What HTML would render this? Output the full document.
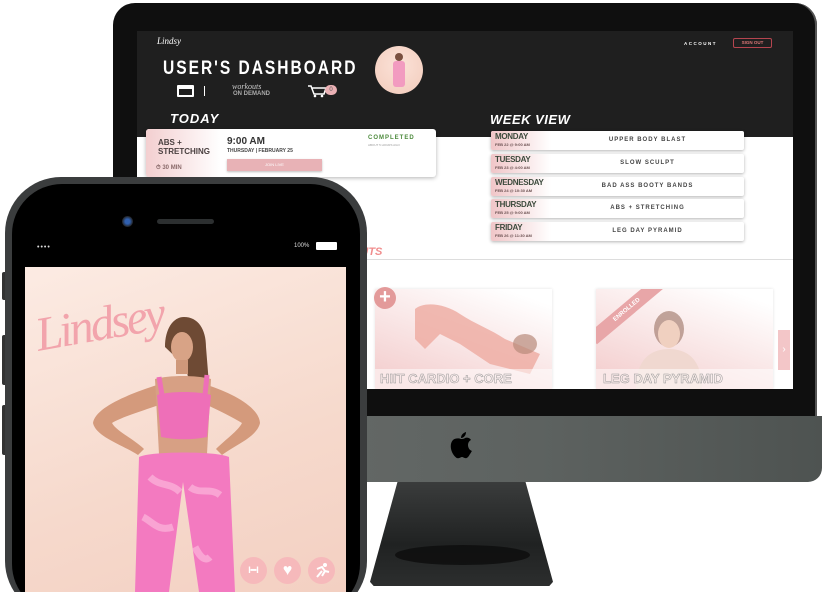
<!DOCTYPE html>
<html style="height:592px;overflow:hidden"><head><meta charset="utf-8"><style>
*{margin:0;padding:0;box-sizing:border-box}
html,body{width:828px;height:592px;overflow:hidden}
body{background:#fff;position:relative;font-family:"Liberation Sans",sans-serif}
.a{position:absolute}
.row{position:absolute;width:253px;height:19px;background:#fff;box-shadow:0 1px 3px rgba(0,0,0,.3);border-radius:2px;overflow:hidden}
.row .d{position:absolute;left:0;top:0;width:60px;height:19px;background:linear-gradient(90deg,#f0c6c8,#fff)}
.row .n{position:absolute;left:4px;top:1px;font-size:8px;font-weight:bold;color:#3c4a3c;letter-spacing:-.3px}
.row .t{position:absolute;left:4px;top:11px;font-size:4px;color:#6a5050;font-weight:bold}
.row .w{position:absolute;left:60px;right:0;top:6px;text-align:center;font-size:6px;letter-spacing:1px;color:#444;font-weight:bold}
</style></head><body>

<div class="a" style="left:113px;top:3px;width:704px;height:416px;background:#0f0f0f;border-radius:22px 22px 0 0;box-shadow:inset -2px 0 0 #555"></div>
<div class="a" style="left:113px;top:416px;width:709px;height:66px;background:linear-gradient(90deg,#6a6e6c,#5d6260 60%,#4e5351);border-radius:0 0 14px 14px"></div>
<svg class="a" style="left:448px;top:430px" width="26" height="32" viewBox="0 0 26 32"><path d="M13 9c-2-1-6-1-8 1-3 3-3 9 0 14 2 3 4 5 6 4 1 0 2-1 3-1s2 1 3 1c2 1 4-2 5-4 1-1 1-2 2-3-3-1-4-4-4-6s1-4 3-5c-1-2-4-3-6-2-1 1-3 1-4 1z" fill="#000"/><path d="M13 8c0-3 2-5 5-6 0 3-2 6-5 6z" fill="#000"/></svg>
<div class="a" style="left:370px;top:482px;width:183px;height:104px;background:linear-gradient(180deg,#3a3c3c,#202222 60%,#2c2e2e);clip-path:polygon(15% 0,85% 0,100% 96%,98% 100%,2% 100%,0 96%)"></div>
<div class="a" style="left:395px;top:545px;width:135px;height:20px;border-radius:50%;background:#0c0c0c;opacity:.8"></div>

<div class="a" style="left:137px;top:31px;width:656px;height:358px;background:#fff;overflow:hidden">
  <div class="a" style="left:0;top:0;width:656px;height:106px;background:#1f1f1f"></div>
  <div class="a" style="left:20px;top:5px;color:#fff;font-family:'Liberation Serif',serif;font-style:italic;font-size:9px">Lindsy</div>
  <div class="a" style="left:26px;top:27px;color:#fff;font-weight:bold;font-size:19px;letter-spacing:2.4px;transform:scaleX(.82);transform-origin:left">USER'S DASHBOARD</div>
  <div class="a" style="left:238px;top:15px;width:48px;height:48px;border-radius:50%;background:radial-gradient(circle at 50% 40%,#fbe2d8,#f2cbbb)"></div>
  <div class="a" style="left:258px;top:22px;width:8px;height:8px;border-radius:50%;background:#7a5040"></div>
  <div class="a" style="left:256px;top:30px;width:12px;height:26px;background:#f29bc0;border-radius:3px"></div>
  <div class="a" style="left:40px;top:54px;width:17px;height:12px;border:2px solid #fff;border-top-width:4px;border-radius:1px"></div>
  <div class="a" style="left:67px;top:55px;width:1px;height:10px;background:#fff"></div>
  <div class="a" style="left:95px;top:51px;color:#ccc;font-family:'Liberation Serif',serif;font-style:italic;font-size:8px">workouts</div>
  <div class="a" style="left:96px;top:60px;color:#aaa;font-size:6px;font-weight:bold">ON DEMAND</div>
  <svg class="a" style="left:170px;top:54px" width="20" height="13"><path d="M1 1h3l3 8h10l2-6H5" stroke="#fff" stroke-width="1.5" fill="none"/><circle cx="8" cy="11" r="1.3" fill="#fff"/><circle cx="15" cy="11" r="1.3" fill="#fff"/></svg>
  <div class="a" style="left:188px;top:54px;width:12px;height:10px;border-radius:5px;background:#eab0b4;color:#555;font-size:6px;text-align:center;line-height:10px">0</div>
  <div class="a" style="left:547px;top:10px;color:#fff;font-size:4.5px;letter-spacing:1.5px;font-weight:bold">ACCOUNT</div>
  <div class="a" style="left:596px;top:7px;width:39px;height:10px;border:1px solid #b5454f;border-radius:2px;color:#d77;font-size:4.5px;text-align:center;line-height:8px;font-weight:bold">SIGN OUT</div>
  <div class="a" style="left:33px;top:80px;color:#fff;font-weight:900;font-style:italic;font-size:13px;letter-spacing:1px">TODAY</div>
  <div class="a" style="left:353px;top:81px;color:#fff;font-weight:900;font-style:italic;font-size:13px;letter-spacing:.5px">WEEK VIEW</div>
  <div class="a" style="left:9px;top:98px;width:290px;height:48px;background:#fff;box-shadow:0 1px 4px rgba(0,0,0,.3);border-radius:3px;overflow:hidden">
    <div class="a" style="left:0;top:0;width:75px;height:48px;background:linear-gradient(90deg,#f3cfd0,#fff)"></div>
    <div class="a" style="left:12px;top:9px;font-size:8px;font-weight:bold;color:#4a4040;line-height:9px">ABS +<br>STRETCHING</div>
    <div class="a" style="left:10px;top:36px;font-size:6px;color:#8a6a6a;font-weight:bold">⏱ 30 MIN</div>
    <div class="a" style="left:81px;top:7px;font-size:10px;font-weight:bold;color:#333">9:00 AM</div>
    <div class="a" style="left:81px;top:19px;font-size:5px;font-weight:bold;color:#444">THURSDAY | FEBRUARY 25</div>
    <div class="a" style="left:81px;top:30px;width:95px;height:12px;background:#e8b2b6;color:#fff;font-size:4px;text-align:center;line-height:12px;box-shadow:0 1px 2px rgba(0,0,0,.25)">JOIN LIVE</div>
    <div class="a" style="left:222px;top:6px;font-size:6px;font-weight:bold;color:#4c8a3c;letter-spacing:1px">COMPLETED</div>
    <div class="a" style="left:222px;top:14px;font-size:3px;color:#999">ABOUT 5 HOURS AGO</div>
  </div>
  <div class="row" style="left:354px;top:100px"><div class="d"></div><div class="n">MONDAY</div><div class="t">FEB 22 @ 9:00 AM</div><div class="w">UPPER BODY BLAST</div></div>
  <div class="row" style="left:354px;top:123px"><div class="d"></div><div class="n">TUESDAY</div><div class="t">FEB 23 @ 4:00 AM</div><div class="w">SLOW SCULPT</div></div>
  <div class="row" style="left:354px;top:146px"><div class="d"></div><div class="n">WEDNESDAY</div><div class="t">FEB 24 @ 10:30 AM</div><div class="w">BAD ASS BOOTY BANDS</div></div>
  <div class="row" style="left:354px;top:168px"><div class="d"></div><div class="n">THURSDAY</div><div class="t">FEB 25 @ 9:00 AM</div><div class="w">ABS + STRETCHING</div></div>
  <div class="row" style="left:354px;top:191px"><div class="d"></div><div class="n">FRIDAY</div><div class="t">FEB 26 @ 11:30 AM</div><div class="w">LEG DAY PYRAMID</div></div>
  <div class="a" style="left:180px;top:215px;color:#f08d8d;font-weight:900;font-style:italic;font-size:11px">WORKOUTS</div>
  <div class="a" style="left:0;top:228px;width:656px;height:1px;background:#ddd"></div>
  <div class="a" style="left:238px;top:258px;width:177px;height:100px;background:linear-gradient(200deg,#fff 10%,#f4d0d0 90%);box-shadow:0 0 3px rgba(0,0,0,.12)">
    <svg class="a" style="left:0;top:0" width="177" height="100"><path d="M40 20c10-8 30-5 45 5s30 15 45 25l35 15-10 20-40-10-30-20-20-10-15 15-10-10z" fill="#eeaaa0" opacity=".8"/><ellipse cx="150" cy="55" rx="12" ry="10" fill="#b88a7a" opacity=".7"/></svg>
    <div class="a" style="left:0;top:80px;width:177px;height:20px;background:rgba(255,255,255,.5)"></div>
    <div class="a" style="left:5px;top:82px;font-size:13px;font-weight:bold;color:transparent;-webkit-text-stroke:.5px #999">HIIT CARDIO + CORE</div>
  </div>
  <div class="a" style="left:237px;top:256px;width:22px;height:22px;border-radius:50%;background:#e39a9a;color:#fff;font-size:20px;line-height:20px;text-align:center;font-weight:bold">+</div>
  <div class="a" style="left:459px;top:258px;width:177px;height:100px;background:linear-gradient(200deg,#fff 10%,#f4d0d0 90%);box-shadow:0 0 3px rgba(0,0,0,.12);overflow:hidden">
    <svg class="a" style="left:0;top:0" width="177" height="100"><ellipse cx="73" cy="40" rx="15" ry="18" fill="#9a7060" opacity=".6"/><ellipse cx="73" cy="45" rx="11" ry="14" fill="#f0d0c0"/><path d="M40 100c0-30 15-40 33-40s33 10 33 40z" fill="#f0d8d0"/></svg>
    <div class="a" style="left:-14px;top:14px;width:90px;height:14px;background:#e8a6a8;transform:rotate(-40deg);color:#fff;font-size:6px;text-align:center;line-height:14px;font-weight:bold">ENROLLED</div>
    <div class="a" style="left:0;top:80px;width:177px;height:20px;background:rgba(255,255,255,.5)"></div>
    <div class="a" style="left:7px;top:82px;font-size:13px;font-weight:bold;color:transparent;-webkit-text-stroke:.5px #999">LEG DAY PYRAMID</div>
  </div>
  <div class="a" style="left:641px;top:299px;width:12px;height:40px;background:#f3c6c8;color:#fff;font-size:10px;line-height:40px;text-align:center">›</div>
</div>

<div class="a" style="left:2px;top:272px;width:5px;height:28px;background:#333;border-radius:2px"></div>
<div class="a" style="left:2px;top:335px;width:5px;height:50px;background:#333;border-radius:2px"></div>
<div class="a" style="left:2px;top:405px;width:5px;height:50px;background:#333;border-radius:2px"></div>
<div class="a" style="left:5px;top:177px;width:362px;height:440px;background:#3b3d3e;border-radius:56px"></div>
<div class="a" style="left:12px;top:184px;width:348px;height:430px;background:#000;border-radius:50px"></div>
<div class="a" style="left:122px;top:216px;width:11px;height:11px;border-radius:50%;background:radial-gradient(circle,#3060b0 30%,#222 70%)"></div>
<div class="a" style="left:157px;top:219px;width:57px;height:5px;border-radius:3px;background:#2c2f30"></div>
<div class="a" style="left:37px;top:244px;color:#ddd;font-size:7px;letter-spacing:1px">••••</div>
<div class="a" style="left:294px;top:243px;color:#ddd;font-size:6px">100%</div>
<div class="a" style="left:316px;top:242px;width:21px;height:8px;background:#fff;border-radius:1px"></div>
<div class="a" style="left:25px;top:267px;width:321px;height:325px;background:linear-gradient(160deg,#fcebe3,#f6d9cc 60%,#f3d0c2);overflow:hidden">
  <div class="a" style="left:10px;top:30px;color:#f2a4ac;font-family:'Liberation Serif',serif;font-style:italic;font-size:48px;transform:rotate(-10deg);letter-spacing:-3px;font-weight:normal">Lindsey</div>
  <svg class="a" style="left:0;top:0" width="321" height="325">
    <path d="M140 80c0-18 8-30 19-30 14 0 22 12 22 30l4 50c-6 8-14 6-18 0l-6-30z" fill="#6e4a34"/>
    <ellipse cx="157" cy="80" rx="11" ry="15" fill="#d8a386"/>
    <rect x="151" y="93" width="12" height="14" fill="#cf987a"/>
    <path d="M132 118c-25 8-62 22-64 38 3 14 30 22 45 32l6-6c-10-10-28-18-32-26 10-6 30-12 47-18z" fill="#d49a7c"/>
    <path d="M182 118c25 8 52 22 53 38-3 14-25 22-38 32l-6-6c10-10 22-18 26-26-10-6-22-12-35-18z" fill="#d49a7c"/>
    <path d="M130 112c15-4 40-4 56 0l-4 75h-48z" fill="#d7a084"/>
    <path d="M132 128c14-4 40-4 54 0l-4 42c-15 3-30 3-46 0z" fill="#ee6fb8"/>
    <path d="M134 110l3 18M182 108l-2 20" stroke="#ee6fb8" stroke-width="5"/>
    <path d="M114 190c12-6 78-6 90 0l6 135h-36l-16-110-14 110h-34z" fill="#f37ac0"/>
    <path d="M125 210c10 10 20 5 30 15M118 250c10 5 15 15 30 10M170 280c5 10 10 15 15 10M165 220c10 8 20 0 30 8" stroke="#fbb6dc" stroke-width="7" fill="none" opacity=".7"/>
  </svg>
  <div class="a" style="left:215px;top:290px;width:27px;height:27px;border-radius:50%;background:#f6b9bb;color:#fff;font-size:9px;text-align:center;line-height:27px;font-weight:bold">I━I</div>
  <div class="a" style="left:249px;top:290px;width:27px;height:27px;border-radius:50%;background:#f6b9bb;color:#fff;font-size:16px;text-align:center;line-height:27px">♥</div>
  <div class="a" style="left:283px;top:290px;width:27px;height:27px;border-radius:50%;background:#f6b9bb"></div>
  <svg class="a" style="left:287px;top:294px" width="20" height="20"><circle cx="13" cy="4" r="2" fill="#fff"/><path d="M5 8l5-2 3 4-3 5M10 10l-5 6M13 10l4 1" stroke="#fff" stroke-width="2" fill="none"/></svg>
</div>
</body></html>
